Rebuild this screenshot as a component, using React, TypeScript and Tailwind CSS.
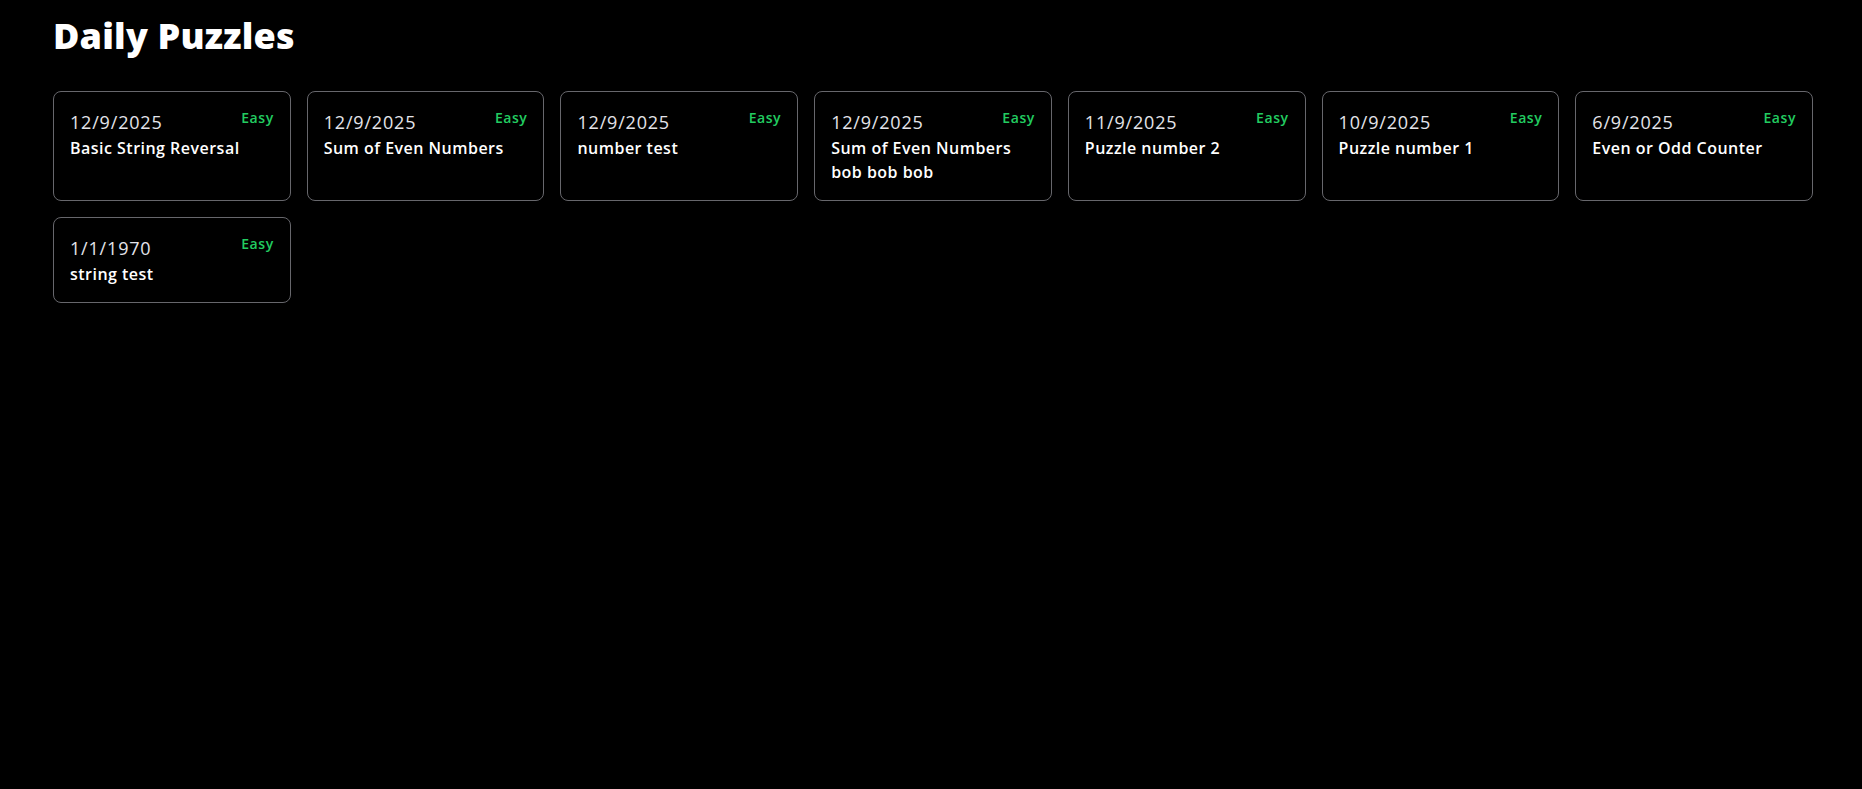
import React from "react";

type Puzzle = { date: string; title: string; difficulty: string };

const puzzles: Puzzle[] = [
  { date: "12/9/2025", title: "Basic String Reversal", difficulty: "Easy" },
  { date: "12/9/2025", title: "Sum of Even Numbers", difficulty: "Easy" },
  { date: "12/9/2025", title: "number test", difficulty: "Easy" },
  { date: "12/9/2025", title: "Sum of Even Numbers bob bob bob", difficulty: "Easy" },
  { date: "11/9/2025", title: "Puzzle number 2", difficulty: "Easy" },
  { date: "10/9/2025", title: "Puzzle number 1", difficulty: "Easy" },
  { date: "6/9/2025", title: "Even or Odd Counter", difficulty: "Easy" },
  { date: "1/1/1970", title: "string test", difficulty: "Easy" },
];

export default function App() {
  return (
    <div
      className="min-h-screen w-full bg-black text-white pl-[53px] pr-[49px] pt-4"
      style={{ fontFamily: '"Open Sans", "Noto Sans", sans-serif' }}
    >
      <h1 className="text-4xl leading-10 font-extrabold text-white mb-[35px] tracking-[0.005em]">
        Daily Puzzles
      </h1>
      <div className="grid grid-cols-7 gap-4">
        {puzzles.map((p, i) => (
          <div
            key={i}
            className="rounded-lg border border-[#67676c] p-4 bg-black"
          >
            <div className="flex items-start justify-between">
              <span className="text-lg leading-7 text-[#e4e4ea] tracking-[0.045em]">
                {p.date}
              </span>
              <span className="text-sm leading-5 font-semibold text-[#22cc60] tracking-[0.04em]">
                {p.difficulty}
              </span>
            </div>
            <div className="text-base leading-6 font-semibold text-white tracking-[0.03em] pr-2">
              {p.title}
            </div>
          </div>
        ))}
      </div>
    </div>
  );
}
